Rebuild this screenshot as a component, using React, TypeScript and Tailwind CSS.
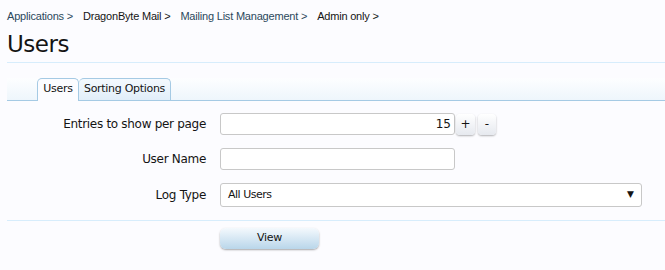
import React from "react";

export default function App() {
  const font = { fontFamily: '"DejaVu Sans", "Noto Sans", sans-serif' };
  const crumb = { fontFamily: '"Liberation Sans", Arial, sans-serif' };
  return (
    <div className="w-[665px] h-[270px] bg-[#fcfcff] text-[#141414] overflow-hidden" style={font}>
      <div className="pl-[7px]">
        <div className="flex items-center h-[31px] text-[11px] gap-[10px] pt-[1px] tracking-[-0.2px]" style={crumb}>
          <span className="text-[#2b485c]">Applications &gt;</span>
          <span>DragonByte Mail &gt;</span>
          <span className="text-[#2b485c]">Mailing List Management &gt;</span>
          <span>Admin only &gt;</span>
        </div>
        <h1 className="text-[23px] leading-[26px] h-[31px] tracking-[-0.5px]">Users</h1>
        <div className="h-[1px] bg-[#d7edfc]" />
        <div className="mt-[15px] h-[23px] flex items-end pl-[30px] border-b border-[#a5cae4] bg-gradient-to-b from-[#fdfeff] to-[#eef6fc]">
          <div className="h-[23px] w-[42px] flex items-center justify-center text-[11px] bg-[#fcfcff] border border-b-0 border-[#a5cae4] rounded-t-[5px] mb-[-1px] pb-[1px] tracking-[-0.3px]">Users</div>
          <div className="h-[22px] w-[92px] flex items-center justify-center text-[11px] bg-gradient-to-b from-[#f4f9fe] to-[#e1eef9] border border-b-0 border-l-0 border-[#a5cae4] rounded-t-[5px] tracking-[-0.3px]">Sorting Options</div>
        </div>
      </div>
      <div className="pl-[7px] text-[12px]">
        <div className="flex items-center mt-[11px] h-[24px]">
          <div className="w-[199px] text-right pr-0 tracking-[-0.3px]">Entries to show per page</div>
          <div className="ml-[14px] w-[235px] h-[22px] border border-[#c8c8c8] rounded-[3px] bg-white flex items-center justify-end pr-[3px] text-[12px]">15</div>
          <div className="ml-[1px] w-[19px] h-[21px] rounded-[4px] bg-gradient-to-b from-[#ffffff] to-[#e6e9ef] shadow-[0_1px_2px_rgba(0,0,0,0.3)] flex items-center justify-center text-[12px]">+</div>
          <div className="ml-[3px] w-[18px] h-[21px] rounded-[4px] bg-gradient-to-b from-[#ffffff] to-[#e6e9ef] shadow-[0_1px_2px_rgba(0,0,0,0.3)] flex items-center justify-center text-[12px]">-</div>
        </div>
        <div className="flex items-center mt-[11px] h-[24px]">
          <div className="w-[199px] text-right tracking-[-0.3px]">User Name</div>
          <div className="ml-[14px] w-[235px] h-[22px] border border-[#c8c8c8] rounded-[3px] bg-white" />
        </div>
        <div className="flex items-center mt-[11px] h-[26px]">
          <div className="w-[199px] text-right tracking-[-0.3px]">Log Type</div>
          <div className="ml-[14px] w-[422px] h-[24px] border border-[#c8c8c8] rounded-[3px] bg-white flex items-center justify-between pl-[7px] pr-[7px] text-[11px]">
            <span className="tracking-[-0.5px]">All Users</span>
            <span className="text-[9px]">▼</span>
          </div>
        </div>
        <div className="mt-[12px] h-[1px] bg-[#d7edfc]" />
        <div className="flex pl-[213px] mt-[7px]">
          <div className="w-[99px] h-[21px] rounded-[6px] bg-gradient-to-b from-[#f4f9fd] to-[#b9d6ea] shadow-[0_1px_2px_rgba(0,0,0,0.35)] flex items-center justify-center text-[11px] tracking-[-0.3px]">View</div>
        </div>
      </div>
    </div>
  );
}
